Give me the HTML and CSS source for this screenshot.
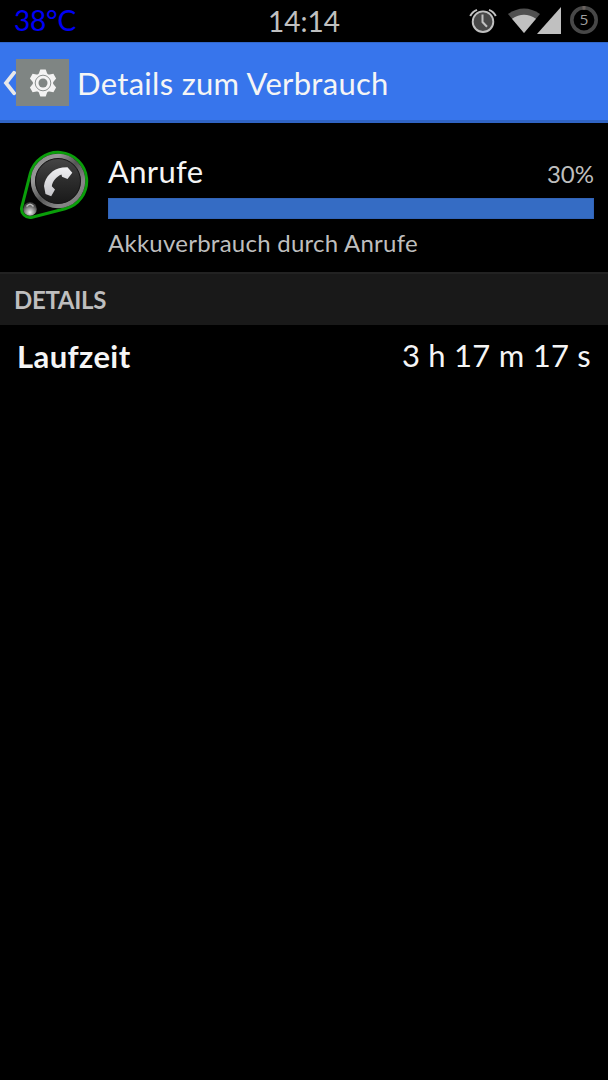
FILE: index.html
```html
<!DOCTYPE html>
<html lang="de">
<head>
    <meta charset="utf-8">
    <title>Details zum Verbrauch</title>
    <link rel="stylesheet" href="styles.css">
</head>
<body>
    <!-- Status bar -->
    <div class="statusbar">
        <span class="temp">38°C</span>
        <span class="clock">14:14</span>
        <div class="status-icons">
            <svg class="alarm" width="28" height="28" viewBox="0 0 28 28">
                <circle cx="14" cy="14.7" r="10.3" fill="#484848" stroke="#c0c0c0" stroke-width="1.9"/>
                <path d="M13.5 7.5v7.5l4.5 4.8" fill="none" stroke="#c0c0c0" stroke-width="2"/>
                <path d="M1.200 9Q3 5 8 2.800M26.800 9Q25 5 20 2.800" fill="none" stroke="#c0c0c0" stroke-width="2"/>
            </svg>
            <svg class="wifi" width="34" height="26" viewBox="0 0 34 26">
                <path d="M1 6Q17-5 33 6L17 25z" fill="#505050"/>
                <path d="M5 10.700Q17 2.700 29 10.700L17 25z" fill="#c0c0c0"/>
            </svg>
            <svg class="signal" width="24" height="27" viewBox="0 0 24 27">
                <path d="M0 27L24 0v27z" fill="#c0c0c0"/>
            </svg>
            <svg class="battery" width="28" height="28" viewBox="0 0 28 28">
                <circle cx="14" cy="14" r="12.200" fill="none" stroke="#484848" stroke-width="3.600"/>
                <path d="M14 0v3.800" stroke="#6b625e" stroke-width="3"/>
                <text x="14" y="19.300" text-anchor="middle">5</text>
            </svg>
        </div>
    </div>

    <!-- Action bar -->
    <div class="actionbar">
        <svg class="back" width="13" height="26" viewBox="0 0 13 26">
            <path d="M11 2.800L3 13L11 23.200" fill="none" stroke="#e8e8ea" stroke-width="3.800" stroke-linecap="round"/>
        </svg>
        <div class="app-icon">
            <svg width="28" height="28" viewBox="0 0 28 28">
                <g fill="#f3f3f3">
                    <circle cx="14" cy="14" r="10.200"/>
                    <path id="tooth" d="M9.500 5.500L11.300.4h5.400L18.500 5.500z"/>
                    <use href="#tooth" transform="rotate(60 14 14)"/>
                    <use href="#tooth" transform="rotate(120 14 14)"/>
                    <use href="#tooth" transform="rotate(180 14 14)"/>
                    <use href="#tooth" transform="rotate(240 14 14)"/>
                    <use href="#tooth" transform="rotate(300 14 14)"/>
                </g>
                <circle cx="14" cy="14" r="7.800" fill="none" stroke="#7f8583" stroke-width=".9"/>
                <circle cx="14" cy="14" r="4.500" fill="#7f8583"/>
            </svg>
        </div>
        <h1>Details zum Verbrauch</h1>
    </div>

    <!-- Usage summary -->
    <div class="usage">
        <svg class="phone" width="70" height="72" viewBox="0 0 70 72">
            <defs>
                <linearGradient id="ring" x1="0" y1="0" x2="1" y2="1">
                    <stop offset="0" stop-color="#8a8a8a"/>
                    <stop offset=".25" stop-color="#999"/>
                    <stop offset=".5" stop-color="#555"/>
                    <stop offset=".75" stop-color="#888"/>
                    <stop offset="1" stop-color="#777"/>
                </linearGradient>
                <linearGradient id="face" x1="0" y1="0" x2="0" y2="1">
                    <stop offset="0" stop-color="#484848"/>
                    <stop offset=".5" stop-color="#2c2c2c"/>
                    <stop offset="1" stop-color="#171717"/>
                </linearGradient>
                <linearGradient id="handset" x1="0" y1="0" x2="0" y2="1">
                    <stop offset="0" stop-color="#f0f0f2"/>
                    <stop offset="1" stop-color="#c4c4c8"/>
                </linearGradient>
                <radialGradient id="ball" cx=".5" cy=".75" r=".6">
                    <stop offset="0" stop-color="#eee"/>
                    <stop offset=".5" stop-color="#999"/>
                    <stop offset="1" stop-color="#444"/>
                </radialGradient>
            </defs>
            <path d="M11.200 24.900A28.700 28.700 0 1 1 46.100 59.800L13.100 68.200A8.500 8.500 0 0 1 2.800 57.900z" fill="#050505" stroke="#0a9e0a" stroke-width="3"/>
            <circle cx="39" cy="32" r="25" fill="url(#face)" stroke="url(#ring)" stroke-width="4.400"/>
            <circle cx="39" cy="32" r="22.500" fill="none" stroke="#151515" stroke-width="1"/>
            <path d="M25 37C26 28 34 19.500 43.500 18.600L48.500 18.300L53.300 23.800L48.500 30L43 27.700L42.500 25.500C37.500 27.500 33.500 32 32.800 37.300L36 40.500L32.200 47.200L26.500 45z" fill="url(#handset)"/>
            <circle cx="11" cy="60" r="6.800" fill="url(#ball)"/>
            <path d="M7.500 57.500Q11 53 14.500 57.500" fill="none" stroke="#bbb" stroke-width="1.500"/>
        </svg>
        <div class="usage-info">
            <div class="usage-head">
                <span class="name">Anrufe</span>
                <span class="percent">30%</span>
            </div>
            <div class="bar"></div>
            <p class="summary">Akkuverbrauch durch Anrufe</p>
        </div>
    </div>

    <!-- Details -->
    <h2 class="section-title">DETAILS</h2>
    <div class="row">
        <span class="label">Laufzeit</span>
        <span class="value">3 h 17 m 17 s</span>
    </div>
</body>
</html>
```
FILE: styles.css
```css
* { box-sizing: border-box; }
body { margin: 0; min-height: 1080px; background: #000; color: #f5f5f5; font-family: Lato, sans-serif; }
h1, h2, p { margin: 0; font-weight: normal; }
svg { display: block; flex: none; }

.statusbar { display: grid; grid-template-columns: 1fr auto 1fr; height: 42px; padding: 0 14px 0 14px; line-height: 40px; }
.temp { color: #0000f5; font-size: 28px; letter-spacing: -.2px; }
.clock { color: #c0c0c0; font-size: 28px; line-height: 42px; }
.status-icons { display: flex; justify-content: flex-end; align-items: flex-start; margin-right: -4px; padding-top: 7px; }
.wifi { margin: 1px 0 0 10px; }
.signal { margin-left: -4px; }
.battery { margin: -1px 0 0 9px; }
.battery text { fill: #a0a0a0; font-family: "Open Sans", sans-serif; font-size: 15px; }

.actionbar { display: flex; align-items: center; height: 81px; padding: 2px 0 0 3px; background: #3775ec; border-top: 1px solid #3167ca; border-bottom: 3px solid #3064c4; }
.app-icon { display: flex; align-items: center; justify-content: center; width: 53px; height: 47px; background: #7f8583; }
.actionbar h1 { margin-left: 8px; font-size: 31px; letter-spacing: .3px; }

.usage { display: flex; height: 149px; padding: 26px 14px 0 19px; }
.usage-info { flex: 1; margin-left: 19px; }
.usage-head { display: flex; justify-content: space-between; align-items: baseline; height: 49px; line-height: 44px; }
.name { font-size: 31px; letter-spacing: .3px; }
.percent { color: #bebebe; font-size: 24px; }
.bar { height: 21px; background: #356cc4; border: 1px solid #3264b8; }
.summary { color: #bebebe; font-size: 24px; letter-spacing: .25px; line-height: 48px; }

.section-title { height: 53px; padding-left: 14px; background: #191919; border-top: 2px solid #222; color: #bebebe; font-size: 24px; font-weight: bold; letter-spacing: -.3px; line-height: 52px; }
.row { display: flex; justify-content: space-between; padding: 0 17px 0 17px; font-size: 31px; letter-spacing: .25px; line-height: 60px; }
.label { font-weight: bold; letter-spacing: .4px; line-height: 62px; }
```
